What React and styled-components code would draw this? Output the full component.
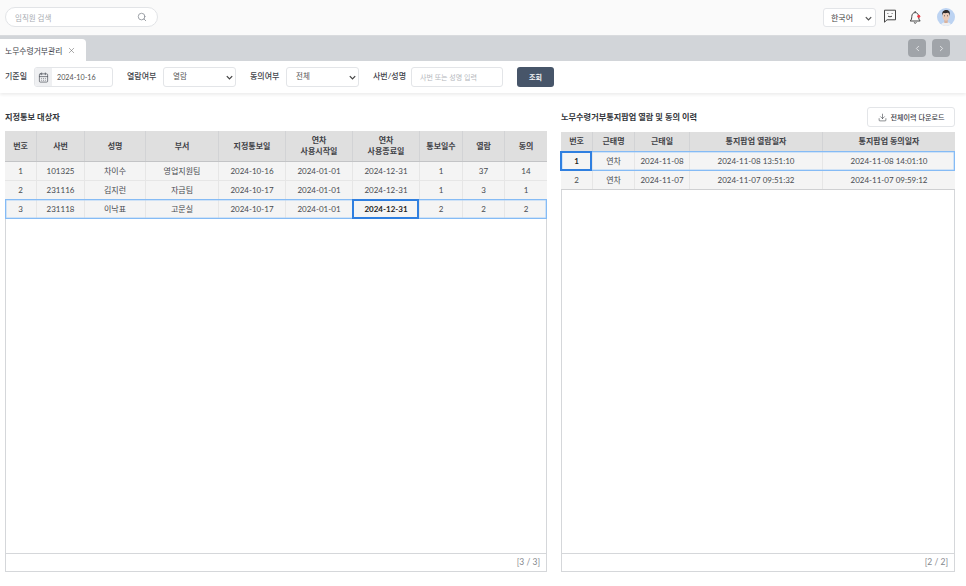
import React from "react";
import styled, { createGlobalStyle } from "styled-components";
import { Search, X, ChevronLeft, ChevronRight, Download, CalendarDays } from "lucide-react";

const Global = createGlobalStyle`
  html, body { margin: 0; padding: 0; background: #fff; }
  body { font-family: Lato, "Noto Sans CJK KR", sans-serif; color: #333; overflow: hidden; }
  * { box-sizing: border-box; }
`;
const Page = styled.div`position: relative; width: 966px; height: 586px; overflow: hidden; background: #fff;`;
const Header = styled.header`
  position: absolute; inset: 0 0 auto 0; height: 36px; background: #fafafa;
  border-bottom: 1px solid #d9dbde;
`;
const SearchBox = styled.div`
  position: absolute; left: 5px; top: 7px; width: 153px; height: 20px; background: #fff;
  border: 1px solid #e2e4e7; border-radius: 10px; display: flex; align-items: center;
  justify-content: space-between; padding: 0 10px 0 9px; font-size: 7.5px; color: #a8acb2;
  svg { color: #8b9097; }
`;
const LangSelect = styled.div`
  position: absolute; left: 823px; top: 8px; width: 53px; height: 19px; background: #fff;
  border: 1px solid #e3e5e8; border-radius: 3px; font-size: 8px; color: #444;
  padding-left: 7px; line-height: 18px;
  svg { position: absolute; right: 2px; top: 5px; color: #555; }
`;
const IconSlot = styled.svg`position: absolute; left: ${p => p.$x}px; top: ${p => p.$y}px;`;
const Avatar = styled.svg`position: absolute; left: 937px; top: 8px; border-radius: 50%;`;
const TabBar = styled.div`position: absolute; left: 0; right: 0; top: 36px; height: 25px; background: #d2d5d9;`;
const Tab = styled.div`
  position: absolute; left: 0; top: 3px; width: 86px; height: 22px; background: #fff;
  border-radius: 0 4px 0 0; font-size: 7.8px; color: #3d4148; display: flex; align-items: center;
  padding-left: 5px; gap: 5px; svg { color: #666; }
`;
const NavButton = styled.div`
  position: absolute; left: ${p => p.$x}px; top: 3px; width: 18px; height: 18px; border-radius: 4px;
  background: #a0a4a9; color: #e8e9eb; display: flex; align-items: center; justify-content: center;
`;
const FilterBar = styled.div`
  position: absolute; left: 0; right: 0; top: 61px; height: 32px; background: #fff;
  box-shadow: 0 2px 3px rgba(0,0,0,.07);
`;
const FilterLabel = styled.span`
  position: absolute; left: ${p => p.$x}px; top: 9px; font-size: 8px; line-height: 12px; font-weight: 500; color: #3f434a; white-space: nowrap;
`;
const Field = styled.div`
  position: absolute; left: ${p => p.$x}px; top: 6px; width: ${p => p.$w}px; height: 20px;
  background: #fff; border: 1px solid #e3e5e8; border-radius: 3px; font-size: ${p => p.$size || 7.2}px;
  line-height: ${p => p.$lh || 18}px;
  color: ${p => p.$muted ? "#b4b7bc" : "#555"}; padding-left: ${p => p.$pad || 9}px; white-space: nowrap;
  & > svg.chev { position: absolute; right: 1px; top: 5px; color: #444; }
`;
const DateIcon = styled.span`
  position: absolute; left: 0; top: 0; width: 17px; height: 18px; background: #eff0f2; border-radius: 2px 0 0 2px;
  display: flex; align-items: center; justify-content: center; color: #4a4f57;
`;
const SearchButton = styled.button`
  position: absolute; left: 517px; top: 6px; width: 37px; height: 20px; border: 0; border-radius: 3px;
  background: #475569; color: #f2f3f5; font: 700 7px Lato, "Noto Sans CJK KR", sans-serif; padding: 0;
`;
const PanelTitle = styled.h2`
  position: absolute; left: ${p => p.$x}px; top: 111px; margin: 0; font-size: 8.2px; line-height: 13px; font-weight: 700; color: #33363b; white-space: nowrap;
`;
const DownloadButton = styled.button`
  position: absolute; left: 867px; top: 107px; width: 88px; height: 20px; background: #fff; border: 1px solid #e3e5e8;
  border-radius: 3px; font: 500 7.1px Lato, "Noto Sans CJK KR", sans-serif; color: #3f434a;
  display: flex; align-items: center; justify-content: center; gap: 3px; padding: 0 0 0 1px;
`;
const Grid = styled.div`
  position: absolute; left: ${p => p.$x}px; top: ${p => p.$y}px; width: ${p => p.$w}px; height: ${p => 572 - p.$y}px;
  border: 1px solid #d5d7da; background: #fff;
`;
const GridFooter = styled.div`
  position: absolute; left: 0; right: 0; bottom: 0; height: 18px; border-top: 1px solid #d5d7da;
  font-size: 8.5px; line-height: 17px; text-align: right; padding-right: 6px; color: #85888e;
`;
const Table = styled.div`position: absolute; left: -1px; top: -1px; width: calc(100% + 2px);`;
const HeadRow = styled.div`
  display: grid; grid-template-columns: ${p => p.$cols}; height: ${p => p.$h}px; background: #dfdfdf; border-bottom: 1px solid #c3c4c6;
`;
const HeadCell = styled.div`
  display: flex; align-items: center; justify-content: center; text-align: center; font-size: 8px; line-height: 11px;
  font-weight: 700; color: #3f4247; border-right: 1px solid #d2d3d5; white-space: pre-line;
  &:last-child { border-right: 0; }
`;
const Row = styled.div`
  position: relative; display: grid; grid-template-columns: ${p => p.$cols}; height: 19px; background: #f4f4f4;
  border-bottom: 1px solid #e6e6e6;
  ${p => p.$last ? "border-bottom-color:#cfd0d2;" : ""}
  ${p => p.$selected ? "&::after{content:'';position:absolute;inset:-1px 0 -1px 0;border:1px solid #85bbf5;box-shadow:inset 0 0 0 .5px #a9d0f8;pointer-events:none;}" : ""}
`;
const Cell = styled.div`
  position: relative; text-align: center; font-size: 8px; line-height: 18px; color: ${p => p.$focus ? "#222" : "#484b50"};
  font-weight: ${p => p.$focus ? 700 : 400}; border-right: 1px solid #e6e6e6; white-space: nowrap;
  &:last-child { border-right: 0; }
  ${p => p.$focus ? "&::after{content:'';position:absolute;inset:-1px 0 -1px -1px;border:2px solid #2f7fe0;z-index:2;}" : ""}
`;

const leftCols = "32px 48px 61px 73px 67px 67px 67px 43px 42px 42px";
const rightCols = "32px 42px 55px 133px 132px";
const leftHead = ["번호","사번","성명","부서","지정통보일","연차\n사용시작일","연차\n사용종료일","통보일수","열람","동의"];
const leftRows = [
  ["1","101325","차이수","영업지원팀","2024-10-16","2024-01-01","2024-12-31","1","37","14"],
  ["2","231116","김지런","자금팀","2024-10-17","2024-01-01","2024-12-31","1","3","1"],
  ["3","231118","이낙표","고문실","2024-10-17","2024-01-01","2024-12-31","2","2","2"],
];
const rightHead = ["번호","근태명","근태일","통지팝업 열람일자","통지팝업 동의일자"];
const rightRows = [
  ["1","연차","2024-11-08","2024-11-08 13:51:10","2024-11-08 14:01:10"],
  ["2","연차","2024-11-07","2024-11-07 09:51:32","2024-11-07 09:59:12"],
];

function DataGrid({ x, y, w, cols, headH, head, rows, selRow, selCol, count }) {
  return (
    <Grid $x={x} $y={y} $w={w}>
      <Table>
        <HeadRow $cols={cols} $h={headH}>{head.map(h => <HeadCell key={h}>{h}</HeadCell>)}</HeadRow>
        {rows.map((r, i) => (
          <Row key={i} $cols={cols} $selected={i === selRow} $last={i === rows.length - 1}>
            {r.map((c, j) => <Cell key={j} $focus={i === selRow && j === selCol}>{c}</Cell>)}
          </Row>
        ))}
      </Table>
      <GridFooter>{count}</GridFooter>
    </Grid>
  );
}

const Chevron = ({ className }) => (
  <svg className={className} width="9" height="9" viewBox="0 0 10 10" fill="none" stroke="currentColor" strokeWidth="1.4"><path d="M2 3.5 5 6.5 8 3.5" /></svg>
);

export default function App() {
  return (
    <Page>
      <Global />
      <Header>
        <SearchBox>임직원 검색<Search size={10} strokeWidth={2} /></SearchBox>
        <LangSelect>한국어<Chevron /></LangSelect>
        <IconSlot $x={883} $y={9} width="14" height="15" viewBox="0 0 14 15" fill="none" stroke="#444" strokeWidth="1">
          <path d="M1.5 1.2h11v9.6H4L1.5 13.2Z" /><path d="M4.5 4.5h.8M8.7 4.5h.8M5 7.2q2 1.2 4 0" />
        </IconSlot>
        <IconSlot $x={909} $y={10} width="13" height="15" viewBox="0 0 13 15" fill="none" stroke="#444" strokeWidth="1">
          <path d="M1.2 11h10c-1.3-1.2-1.5-2.5-1.6-4.5C9.500 4 8.200 2.600 6.200 2.600S2.900 4 2.800 6.500C2.700 8.500 2.500 9.800 1.200 11Z" />
          <path d="M6.200 1v1.600M4.900 12.500q1.300 1.500 2.600 0" />
          <circle cx="9.800" cy="6.300" r="1.500" fill="#ef3b45" stroke="none" />
        </IconSlot>
        <Avatar width="18" height="18" viewBox="0 0 18 18">
          <rect width="18" height="18" fill="#bcd3f2" />
          <path d="M3.500 18c.5-3 3-4 5.500-4s5 1 5.500 4Z" fill="#eef0f3" />
          <rect x="7.300" y="11" width="3.400" height="4" fill="#d9b39e" />
          <ellipse cx="9" cy="8" rx="3.500" ry="4.700" fill="#eccbb7" />
          <path d="M5.200 8C4.500 3.500 7 2 9.300 2s4.300 1.500 3.500 6c-.3-1.800-.8-2.800-1.800-3.200-1.500.6-3.500.5-4.500.3-.8.600-1.400 1.500-1.300 2.900Z" fill="#2e2a2a" />
          <path d="M7 7.800h1M10 7.800h1" stroke="#333" strokeWidth=".7" />
        </Avatar>
      </Header>
      <TabBar>
        <Tab>노무수령거부관리<X size={9} strokeWidth={1.4} /></Tab>
        <NavButton $x={908}><ChevronLeft size={9} strokeWidth={2.4} /></NavButton>
        <NavButton $x={932}><ChevronRight size={9} strokeWidth={2.4} /></NavButton>
      </TabBar>
      <FilterBar>
        <FilterLabel $x={5}>기준일</FilterLabel>
        <Field $x={34} $w={79} $pad={22} $lh={20}>
          <DateIcon><CalendarDays size={11} strokeWidth={1.5} /></DateIcon>2024-10-16
        </Field>
        <FilterLabel $x={127}>열람여부</FilterLabel>
        <Field $x={163} $w={73} $size={7.5}>열람<Chevron className="chev" /></Field>
        <FilterLabel $x={250}>동의여부</FilterLabel>
        <Field $x={286} $w={73} $size={7.5}>전체<Chevron className="chev" /></Field>
        <FilterLabel $x={373}>사번/성명</FilterLabel>
        <Field $x={411} $w={92} $muted $pad={8} $size={7}>사번 또는 성명 입력</Field>
        <SearchButton>조회</SearchButton>
      </FilterBar>
      <PanelTitle $x={5}>지정통보 대상자</PanelTitle>
      <PanelTitle $x={561}>노무수령거부통지팝업 열람 및 동의 이력</PanelTitle>
      <DownloadButton><Download size={9} strokeWidth={1.6} />전체이력 다운로드</DownloadButton>
      <DataGrid x={5} y={131} w={542} cols={leftCols} headH={31} head={leftHead} rows={leftRows} selRow={2} selCol={6} count="[3 / 3]" />
      <DataGrid x={561} y={132} w={394} cols={rightCols} headH={20} head={rightHead} rows={rightRows} selRow={0} selCol={0} count="[2 / 2]" />
    </Page>
  );
}
